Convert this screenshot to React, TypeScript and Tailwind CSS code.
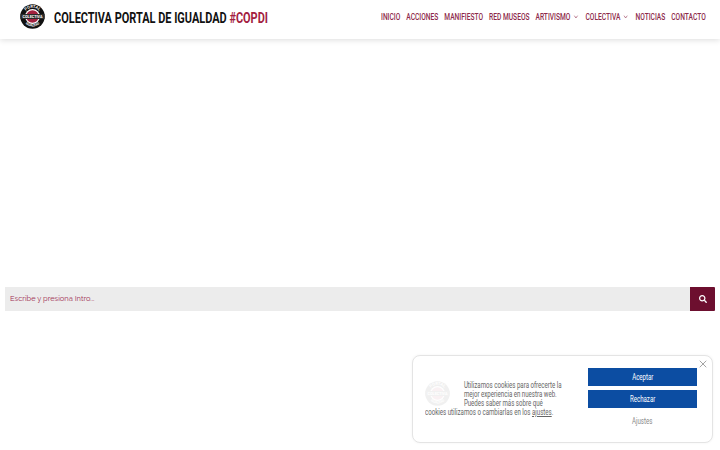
import { ChevronDown, X } from 'lucide-react';
import { FaSearch } from 'react-icons/fa';

const NAV = [
  { label: 'INICIO' },
  { label: 'ACCIONES' },
  { label: 'MANIFIESTO' },
  { label: 'RED MUSEOS' },
  { label: 'ARTIVISMO', caret: true },
  { label: 'COLECTIVA', caret: true },
  { label: 'NOTICIAS' },
  { label: 'CONTACTO' },
];

function Logo({ className }: { className: string }) {
  return (
    <svg className={className} viewBox="0 0 50 50">
      <defs>
        <path id="arc-top" d="M7.5 25a17.5 17.5 0 0 1 35 0" />
        <path id="arc-bottom" d="M5 25a20 20 0 0 0 40 0" />
      </defs>
      <circle cx="25" cy="25" r="24.5" fill="#111" />
      <circle cx="25" cy="25" r="15" fill="#fff" />
      <circle cx="25" cy="25" r="12.5" fill="#a3213f" />
      <rect x="1" y="20" width="48" height="10" fill="#2a2a2a" />
      <text x="25" y="28" textAnchor="middle" fontSize="7.5" fontWeight="700" fill="#fff" fontFamily="Roboto, sans-serif">COLECTIVA</text>
      <text fontSize="8" fontWeight="700" fill="#fff" fontFamily="Roboto, sans-serif">
        <textPath href="#arc-top" startOffset="50%" textAnchor="middle">PORTAL</textPath>
      </text>
      <text fontSize="6.5" fontWeight="700" fill="#fff" fontFamily="Roboto, sans-serif">
        <textPath href="#arc-bottom" startOffset="50%" textAnchor="middle">IGUALDAD</textPath>
      </text>
    </svg>
  );
}

export default function App() {
  return (
    <div className="relative h-[450px] w-[720px] overflow-hidden bg-white font-['Roboto',sans-serif]">
      <header className="flex h-[39px] items-center justify-between pl-[20px] pr-[14px] shadow-[0_1px_6px_rgba(0,0,0,0.14)]">
        <div className="flex items-center">
          <Logo className="mb-[7px] h-[25px] w-[25px]" />
          <div className="ml-[9px] mb-[3px] w-[215px] origin-left scale-x-[0.73] whitespace-nowrap text-[15px] font-bold leading-none text-[#111]">
            COLECTIVA PORTAL DE IGUALDAD <span className="text-[#a3213f]">#COPDI</span>
          </div>
        </div>
        {/* no condensed face installed, so the whole row is squeezed */}
        <div className="mb-[6px] w-[325px] shrink-0">
          <nav className="flex w-[464px] origin-left scale-x-[0.7] items-center justify-between text-[#8e2a4a]">
            {NAV.map((item) => (
              <span key={item.label} className="flex items-center whitespace-nowrap text-[9.5px] font-medium leading-none">
                {item.label}
                {item.caret && <ChevronDown className="ml-[2px] h-[8px] w-[11px]" strokeWidth={2} />}
              </span>
            ))}
          </nav>
        </div>
      </header>

      <main className="px-[5px] pt-[248px]">
        <div className="flex h-[24px]">
          <div className="flex flex-1 items-center bg-[#ececec] pl-[5px] font-['Raleway','Lato',sans-serif] text-[7.5px] text-[#a02c50]">
            Escribe y presiona Intro...
          </div>
          <button className="flex w-[25px] items-center justify-center rounded-r-[1px] bg-[#6d0f2f] text-white">
            <FaSearch className="h-[8px] w-[8px]" />
          </button>
        </div>
      </main>

      {/* cookie notice, floats over the page */}
      <aside className="absolute left-[412px] top-[355px] flex h-[88px] w-[301px] rounded-[8px] border border-[#e4e4e4] bg-white pl-[12px] pr-[15px] pt-[12px] shadow-[0_0_3px_rgba(0,0,0,0.05)]">
        <X className="absolute right-[3px] top-[2px] h-[12px] w-[12px] text-[#666]" strokeWidth={1.2} />
        <Logo className="absolute left-[12px] top-[25px] h-[25px] w-[25px] opacity-[0.06]" />
        <div className="w-[150px] shrink-0">
          <p className="w-[210px] origin-left scale-x-[0.72] pt-[13px] text-[8.5px] leading-[9px] whitespace-nowrap text-[#666]">
            <span className="block pl-[54px]">Utilizamos cookies para ofrecerte la</span>
            <span className="block pl-[54px]">mejor experiencia en nuestra web.</span>
            <span className="block pl-[54px]">Puedes saber más sobre qué</span>
            <span className="block">
              cookies utilizamos o cambiarlas en los <span className="underline">ajustes</span>.
            </span>
          </p>
        </div>
        <div className="ml-auto flex w-[109px] flex-col gap-[4px] text-[8.5px] text-white">
          <button className="h-[18px] bg-[#0c4da2]"><span className="inline-block scale-x-[0.72]">Aceptar</span></button>
          <button className="h-[18px] bg-[#0c4da2]"><span className="inline-block scale-x-[0.72]">Rechazar</span></button>
          <button className="h-[18px] text-[#8a8a8a]"><span className="inline-block scale-x-[0.72]">Ajustes</span></button>
        </div>
      </aside>
    </div>
  );
}
